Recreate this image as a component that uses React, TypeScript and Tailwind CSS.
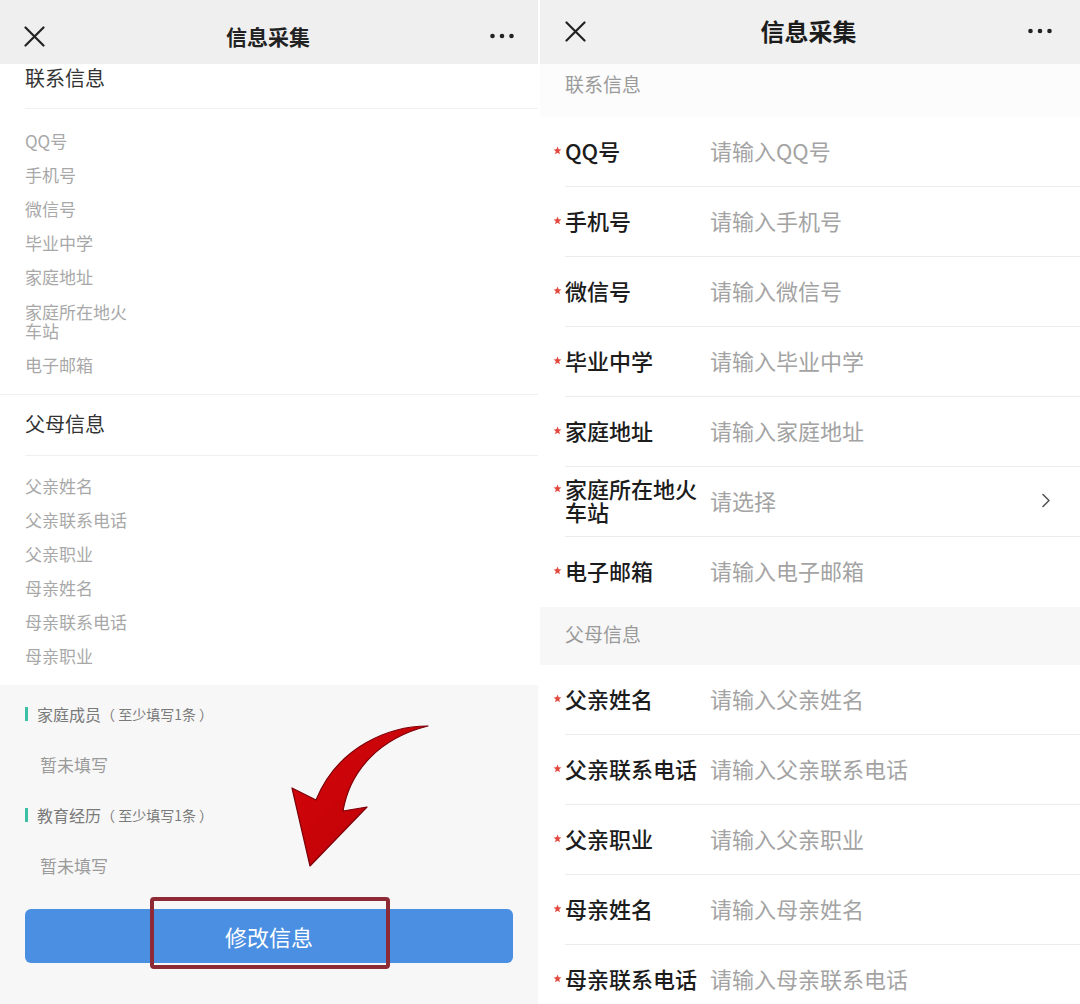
import React from "react";

const leftContact = ["QQ号", "手机号", "微信号", "毕业中学", "家庭地址", "家庭所在地火车站", "电子邮箱"];
const leftParent = ["父亲姓名", "父亲联系电话", "父亲职业", "母亲姓名", "母亲联系电话", "母亲职业"];

const rightContact: { label: string; ph: string; select?: boolean }[] = [
  { label: "QQ号", ph: "请输入QQ号" },
  { label: "手机号", ph: "请输入手机号" },
  { label: "微信号", ph: "请输入微信号" },
  { label: "毕业中学", ph: "请输入毕业中学" },
  { label: "家庭地址", ph: "请输入家庭地址" },
  { label: "家庭所在地火车站", ph: "请选择", select: true },
  { label: "电子邮箱", ph: "请输入电子邮箱" },
];
const rightParent: { label: string; ph: string }[] = [
  { label: "父亲姓名", ph: "请输入父亲姓名" },
  { label: "父亲联系电话", ph: "请输入父亲联系电话" },
  { label: "父亲职业", ph: "请输入父亲职业" },
  { label: "母亲姓名", ph: "请输入母亲姓名" },
  { label: "母亲联系电话", ph: "请输入母亲联系电话" },
];

function CloseIcon() {
  return (
    <svg width="21" height="21" viewBox="0 0 21 21" fill="none">
      <path d="M1.5 1.5 L19.5 19.5 M19.5 1.5 L1.5 19.5" stroke="#222" strokeWidth="2.2" strokeLinecap="round" />
    </svg>
  );
}

function Dots() {
  return (
    <svg width="24" height="6" viewBox="0 0 24 6">
      <circle cx="2.5" cy="3" r="2.3" fill="#222" />
      <circle cx="12" cy="3" r="2.3" fill="#222" />
      <circle cx="21.5" cy="3" r="2.3" fill="#222" />
    </svg>
  );
}

function Star() {
  return (
    <svg width="9" height="9" viewBox="0 0 10 10">
      <path
        d="M5 0.6 L6.2 3.6 L9.4 3.8 L6.9 5.9 L7.7 9.1 L5 7.4 L2.3 9.1 L3.1 5.9 L0.6 3.8 L3.8 3.6 Z"
        fill="#e2473e"
      />
    </svg>
  );
}

function Chevron() {
  return (
    <svg width="10" height="15" viewBox="0 0 10 15" fill="none">
      <path d="M2 1.5 L8 7.5 L2 13.5" stroke="#555" strokeWidth="1.6" strokeLinecap="round" strokeLinejoin="round" />
    </svg>
  );
}

function SectionNote({ title }: { title: string }) {
  return (
    <div className="flex items-center h-[20px]">
      <span className="w-[3px] h-[14px] bg-[#3dbfa6] mr-[9px]" />
      <span className="text-[16px] leading-[20px] text-[#7a7a7a]">{title}</span>
      <span className="text-[14px] leading-[20px] text-[#7a7a7a]">（ 至少填写1条 ）</span>
    </div>
  );
}

function LeftPanel() {
  return (
    <div className="w-[538px] h-full flex flex-col relative bg-white">
      <div className="h-[64px] shrink-0 bg-[#efefef] grid grid-cols-[1fr_auto_1fr] items-center px-[24px] pt-[8px]">
        <div className="flex items-center">
          <CloseIcon />
        </div>
        <div className="text-[21px] leading-[24px] font-bold text-[#222] -ml-[2px]">信息采集</div>
        <div className="flex justify-end">
          <Dots />
        </div>
      </div>

      <div className="pl-[25px]">
        <div className="pt-[4px] pb-[20px] border-b border-[#f0f0f0] text-[20px] leading-[20px] text-[#333]">联系信息</div>
        <div className="flex flex-col gap-[16px] pt-[23px] pb-[20px] text-[17px] leading-[18px] text-[#a8a8a8]">
          {leftContact.map((t) => (
            <div key={t} className={"w-[112px] " + (t.length > 6 ? "leading-[19px]" : "")}>
              {t}
            </div>
          ))}
        </div>
      </div>
      <div className="border-t border-[#f0f0f0]" />
      <div className="pl-[25px]">
        <div className="pt-[19px] pb-[21px] border-b border-[#f0f0f0] text-[20px] leading-[20px] text-[#333]">父母信息</div>
        <div className="flex flex-col gap-[16px] pt-[21px] pb-[20px] text-[17px] leading-[18px] text-[#a8a8a8]">
          {leftParent.map((t) => (
            <div key={t} className="w-[112px]">
              {t}
            </div>
          ))}
        </div>
      </div>

      <div className="flex-1 bg-[#f7f7f7] px-[25px] pt-[19px]">
        <SectionNote title="家庭成员" />
        <div className="mt-[31px] pl-[15px] text-[17px] leading-[20px] text-[#9a9a9a]">暂未填写</div>
        <div className="mt-[30px]">
          <SectionNote title="教育经历" />
        </div>
        <div className="mt-[31px] pl-[15px] text-[17px] leading-[20px] text-[#9a9a9a]">暂未填写</div>
        <div className="mt-[33px] h-[54px] rounded-[6px] bg-[#4a8fe2] flex items-center justify-center text-white text-[22px] leading-[24px]">
          修改信息
        </div>
      </div>

      {/* red highlight box */}
      <div className="absolute left-[150px] top-[897px] w-[240px] h-[72px] border-[4px] border-[#8d2a36] rounded-[4px]" />

      {/* curved red arrow */}
      <svg className="absolute left-0 top-0 pointer-events-none" width="538" height="1004" viewBox="0 0 538 1004">
        <defs>
          <linearGradient id="arrowGrad" x1="0" y1="0" x2="1" y2="1">
            <stop offset="0" stopColor="#d6070b" />
            <stop offset="1" stopColor="#b90006" />
          </linearGradient>
        </defs>
        <path
          d="M428 726 C390 726 338 746 316 800 L292 788 L310 866 L367 807 L343 811 C350 770 380 738 428 726 Z"
          fill="url(#arrowGrad)"
          stroke="#7d0008"
          strokeWidth="1.2"
          strokeLinejoin="round"
        />
      </svg>
    </div>
  );
}

function Row({ label, ph, select, last }: { label: string; ph: string; select?: boolean; last?: boolean }) {
  return (
    <div
      className={
        "ml-[25px] h-[70px] shrink-0 flex items-center pb-[3px] border-b " +
        (last ? "border-transparent" : "border-[#ececec]")
      }
    >
      <div className="-ml-[12px] w-[157px] flex items-start">
        <span className="w-[12px] h-[23px] flex items-center">
          <Star />
        </span>
        <span className="flex-1 text-[22px] leading-[23px] font-medium text-[#1c1c1c]">{label}</span>
      </div>
      <span className="text-[22px] leading-[23px] text-[#a3a3a3]">{ph}</span>
      {select && (
        <span className="ml-auto mr-[29px] flex items-center">
          <Chevron />
        </span>
      )}
    </div>
  );
}

function RightPanel() {
  return (
    <div className="flex-1 h-full flex flex-col bg-white overflow-hidden">
      <div className="h-[64px] shrink-0 bg-[#f0f0f0] grid grid-cols-[1fr_auto_1fr] items-center px-[25px] pr-[28px] pb-[2px]">
        <div className="flex items-center">
          <CloseIcon />
        </div>
        <div className="text-[24px] leading-[26px] font-bold text-[#1c1c1c]">信息采集</div>
        <div className="flex justify-end">
          <Dots />
        </div>
      </div>
      <div className="h-[53px] shrink-0 bg-[#fcfcfc] pl-[25px] pt-[10px] text-[19px] leading-[20px] text-[#9a9a9a]">联系信息</div>
      {rightContact.map((r, i) => (
        <Row key={r.label} label={r.label} ph={r.ph} select={r.select} last={i === rightContact.length - 1} />
      ))}
      <div className="h-[58px] shrink-0 bg-[#f7f7f7] pl-[25px] pt-[17px] text-[19px] leading-[20px] text-[#9a9a9a]">父母信息</div>
      {rightParent.map((r) => (
        <Row key={r.label} label={r.label} ph={r.ph} />
      ))}
    </div>
  );
}

export default function App() {
  return (
    <div className="w-[1080px] h-[1004px] overflow-hidden bg-white flex gap-[2px] font-['Noto_Sans_CJK_SC','Noto_Sans',sans-serif]">
      <LeftPanel />
      <RightPanel />
    </div>
  );
}
